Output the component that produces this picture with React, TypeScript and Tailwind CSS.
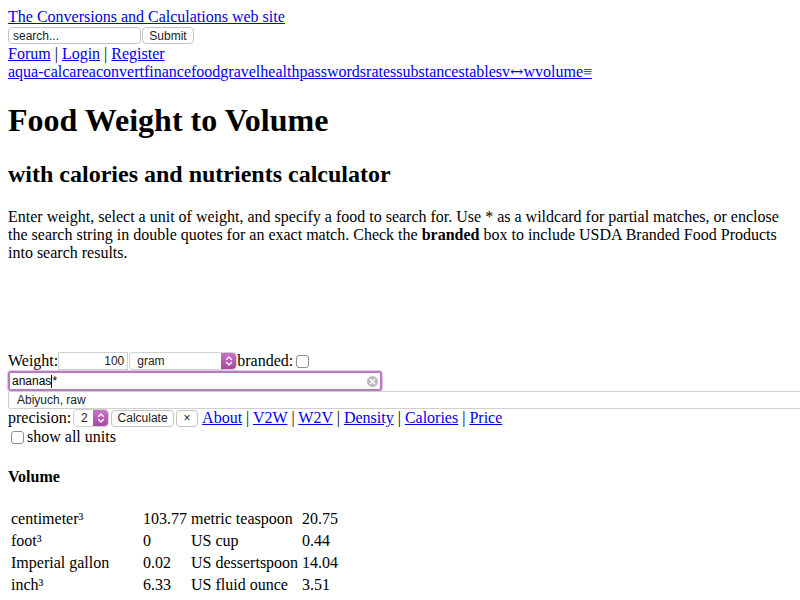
import React from "react";

const Stepper = () => (
  <div className="h-full w-[15px] rounded-r-[4px] bg-gradient-to-b from-[#c872c8] to-[#a8479f] flex items-center justify-center">
    <svg width="8" height="12" viewBox="0 0 8 12" fill="none" stroke="white" strokeWidth="1.4" strokeLinecap="round" strokeLinejoin="round">
      <path d="M1.5 4.5 L4 2 L6.5 4.5" />
      <path d="M1.5 7.5 L4 10 L6.5 7.5" />
    </svg>
  </div>
);

const A = ({ children }: { children: React.ReactNode }) => (
  <a href="#" className="text-[#0000ee] underline">
    {children}
  </a>
);

const ctrl = "font-['Liberation_Sans',Arial,sans-serif] text-[12px] text-[#222]";

export default function App() {
  const nav = ["aqua-calc", "area", "convert", "finance", "food", "gravel", "health", "passwords", "rates", "substances", "tables"];
  const rows = [
    ["centimeter\u00b3", "103.77", "metric teaspoon", "20.75"],
    ["foot\u00b3", "0", "US cup", "0.44"],
    ["Imperial gallon", "0.02", "US dessertspoon", "14.04"],
    ["inch\u00b3", "6.33", "US fluid ounce", "3.51"],
  ];
  return (
    <div className="min-h-[600px] bg-white p-2 font-['Liberation_Serif','Times_New_Roman',serif] text-[16px] leading-[18px] text-black overflow-hidden">
      <div className="h-[18px]">
        <A>The Conversions and Calculations web site</A>
      </div>
      <div className="h-[19px] flex items-center">
        <div className={`w-[133px] h-[17px] border border-[#c4c4c4] rounded-[4px] flex items-center px-[4px] ${ctrl} text-[#8a8a8a]`}>search...</div>
        <div className={`ml-[1px] w-[52px] h-[17px] border border-[#c4c4c4] rounded-[4px] bg-white flex items-center justify-center ${ctrl}`}>Submit</div>
      </div>
      <div className="h-[18px]">
        <A>Forum</A> | <A>Login</A> | <A>Register</A>
      </div>
      <div className="h-[18px] whitespace-nowrap">
        {nav.map((n) => (
          <A key={n}>{n}</A>
        ))}
        <A>
          v<span className="font-['DejaVu_Serif',serif] text-[16px] leading-[18px]">{"\u2194"}</span>w
        </A>
        <A>volume</A>
        <A>{"\u2261"}</A>
      </div>
      <h1 className="mt-[21px] text-[32px] leading-[37px] font-bold">Food Weight to Volume</h1>
      <h2 className="mt-[21px] text-[24px] leading-[28px] font-bold">with calories and nutrients calculator</h2>
      <p className="mt-[20px]">
        Enter weight, select a unit of weight, and specify a food to search for. Use * as a wildcard for partial matches, or enclose the search string in double quotes for an exact match. Check the <b>branded</b> box to include USDA Branded Food Products into search results.
      </p>
      <div className="mt-[90px] h-[18px] flex items-center whitespace-nowrap">
        <span>Weight:</span>
        <div className={`w-[70px] h-[18px] border border-[#d0d0d0] flex items-center justify-end pr-[3px] ${ctrl}`}>100</div>
        <div className={`ml-[1px] w-[108px] h-[18px] border border-[#d0d0d0] rounded-[4px] flex items-center justify-between ${ctrl}`}>
          <span className="pl-[7px]">gram</span>
          <Stepper />
        </div>
        <span>branded:</span>
        <div className="ml-[3px] w-[13px] h-[13px] border border-[#8f8f8f] rounded-[3px]" />
      </div>
      <div className="h-[21px] pt-[1px]">
        <div className={`w-[374px] h-[20px] border-2 border-[#b77cbd] rounded-[3px] flex items-center justify-between px-[2px] ${ctrl} text-black shadow-[0_0_0_1px_#e4c8e6]`}>
          <span className="flex items-center">
            ananas<span className="inline-block w-px h-[13px] bg-black" />*
          </span>
          <svg width="11" height="11" viewBox="0 0 11 11">
            <circle cx="5.5" cy="5.5" r="5.5" fill="#bdbdbd" />
            <path d="M3.5 3.5 L7.5 7.5 M7.5 3.5 L3.5 7.5" stroke="white" strokeWidth="1.4" strokeLinecap="round" />
          </svg>
        </div>
      </div>
      <div className={`-mr-[20px] h-[18px] border-t border-b border-l border-[#cfcfcf] rounded-l-[3px] flex items-center pl-[8px] ${ctrl} text-[#222]`}>Abiyuch, raw</div>
      <div className="h-[18px] flex items-center whitespace-nowrap">
        <span>precision:</span>
        <div className={`ml-[2px] w-[36px] h-[18px] border border-[#d0d0d0] rounded-[4px] flex items-center justify-between ${ctrl}`}>
          <span className="pl-[7px]">2</span>
          <Stepper />
        </div>
        <div className={`ml-[2px] w-[63px] h-[17px] border border-[#c4c4c4] rounded-[4px] flex items-center justify-center ${ctrl}`}>Calculate</div>
        <div className={`ml-[2px] w-[22px] h-[17px] border border-[#c4c4c4] rounded-[4px] flex items-center justify-center ${ctrl}`}>×</div>
        <span className="ml-[4px]">
          <A>About</A> | <A>V2W</A> | <A>W2V</A> | <A>Density</A> | <A>Calories</A> | <A>Price</A>
        </span>
      </div>
      <div className="h-[20px] flex items-center">
        <div className="ml-[3px] mr-[3px] w-[13px] h-[13px] border border-[#8f8f8f] rounded-[3px]" />
        <span>show all units</span>
      </div>
      <h4 className="mt-[21px] font-bold">Volume</h4>
      <table className="mt-[21px] border-separate border-spacing-[2px]">
        <tbody>
          {rows.map((r) => (
            <tr key={r[0]}>
              <td className="p-[1px] w-[130px]">{r[0]}</td>
              <td className="p-[1px]">{r[1]}</td>
              <td className="p-[1px]">{r[2]}</td>
              <td className="p-[1px]">{r[3]}</td>
            </tr>
          ))}
        </tbody>
      </table>
    </div>
  );
}
